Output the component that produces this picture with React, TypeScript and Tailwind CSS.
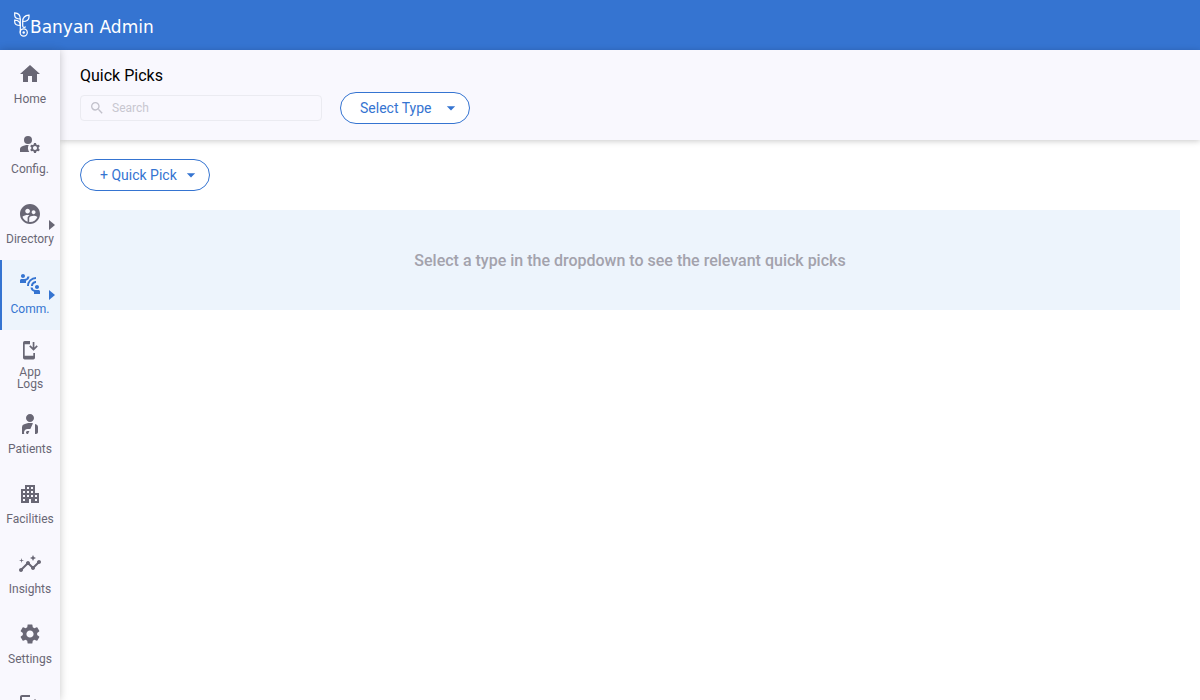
import type { ComponentType, ReactNode } from "react";
import {
  MdApartment,
  MdArrowDropDown,
  MdConnectWithoutContact,
  MdHome,
  MdInsights,
  MdLogout,
  MdManageAccounts,
  MdPersonalInjury,
  MdSearch,
  MdSettings,
  MdSupervisedUserCircle,
} from "react-icons/md";

type NavItem = {
  label: string;
  icon: ComponentType<{ className?: string }>;
  active?: boolean;
  submenu?: boolean;
  compact?: boolean;
};

function PhoneDownloadIcon({ className }: { className?: string }) {
  return (
    <svg viewBox="-3 -1 20 20" className={className} fill="currentColor">
      <path d="M7 0H1.700A1.700 1.700 0 0 0 0 1.700v15A1.700 1.700 0 0 0 1.700 18.400h8.600a1.700 1.700 0 0 0 1.700-1.700V12h-1.700v2.800H1.700V3.300H7z" />
      <path d="M9.700 1h1.700v5.500l2.200-2.200 1.200 1.200-4.300 4.300-4.300-4.300 1.200-1.200 2.300 2.200z" />
    </svg>
  );
}

const navItems: NavItem[] = [
  { label: "Home", icon: MdHome },
  { label: "Config.", icon: MdManageAccounts },
  { label: "Directory", icon: MdSupervisedUserCircle, submenu: true },
  { label: "Comm.", icon: MdConnectWithoutContact, submenu: true, active: true },
  { label: "App Logs", icon: PhoneDownloadIcon, compact: true },
  { label: "Patients", icon: MdPersonalInjury },
  { label: "Facilities", icon: MdApartment },
  { label: "Insights", icon: MdInsights },
  { label: "Settings", icon: MdSettings },
  { label: "Logout", icon: MdLogout },
];

function NavLink({ label, icon: Icon, active, submenu, compact }: NavItem) {
  return (
    <a
      href="#"
      className={`relative flex h-[70px] shrink-0 flex-col items-center text-xs ${
        compact ? "gap-1.5 pt-2.5" : "gap-[5px] pt-3"
      } ${active ? "bg-[#edf4fc] text-[#3574d1]" : "text-[#696775]"}`}
    >
      {active && <span className="absolute inset-y-0 left-0 w-0.5 bg-[#3574d1]" />}
      <Icon className={compact ? "size-5" : "size-6"} />
      <span className={`text-center ${compact ? "w-8 leading-3" : "leading-4"}`}>{label}</span>
      {submenu && (
        <svg viewBox="0 0 6 10" className="absolute top-[30px] right-[5px] h-2.5 w-1.5" fill="currentColor">
          <path d="M0 0l6 5-6 5z" />
        </svg>
      )}
    </a>
  );
}

function PillButton({ children }: { children: ReactNode }) {
  return (
    <button
      type="button"
      className="flex h-8 w-[130px] items-center justify-between rounded-full border border-[#3574d1] bg-white pr-2 pl-[19px] text-sm text-[#3574d1]"
    >
      {children}
      <MdArrowDropDown className="size-5" />
    </button>
  );
}

function Logo() {
  return (
    <svg viewBox="0 0 16 26" className="h-[26px] w-4" fill="none" stroke="currentColor" strokeWidth="1.2">
      <path d="M.7.8v2.400c0 2.400 1.800 3.800 5.600 3.800C6.300 3.200 4.500 1 .7.800z" />
      <path d="M.7 8.200v1.800c0 2.300 1.800 3.500 5.600 3.500 0-3.500-1.800-5.300-5.600-5.300z" />
      <path d="M8.700 9.500c0-3.800 2-6 6.300-6.300v1.800c0 3-2 4.500-6.300 4.500z" />
      <path d="M6.300 7v13.500M8.700 9.500v4.500c0 1.700 2 1.700 3 .7" />
      <circle cx="9.700" cy="20.500" r="3.600" />
      <circle cx="9.700" cy="20.500" r="1.200" fill="currentColor" stroke="none" />
    </svg>
  );
}

export default function App() {
  return (
    <div className="flex h-screen flex-col overflow-hidden bg-white font-[Roboto,sans-serif]">
      <header className="flex h-[50px] shrink-0 items-center bg-[#3574d1] px-3.5 text-white">
        <a href="#" className="flex items-center">
          <Logo />
          <span className="pt-1 font-[DejaVu_Sans,sans-serif] text-[17px] leading-6">Banyan Admin</span>
        </a>
      </header>
      <div className="flex min-h-0 flex-1">
        <nav className="z-10 flex w-[60px] shrink-0 flex-col overflow-y-auto bg-[#f9f8fe] shadow-[0_0_8px_rgba(0,0,0,0.22)] [scrollbar-width:none]">
          {navItems.map((item) => (
            <NavLink key={item.label} {...item} />
          ))}
        </nav>
        <main className="min-w-0 flex-1">
          <section className="bg-[#f9f8fe] px-5 pt-3.5 pb-4 shadow-[0_1px_6px_rgba(0,0,0,0.22)]">
            <h1 className="text-base leading-6 text-black">Quick Picks</h1>
            <div className="mt-1 flex items-center gap-[18px]">
              <label className="flex h-[26px] w-[242px] items-center gap-[7px] rounded border border-[#ebebf1] px-2 text-[#c2c1cb]">
                <MdSearch className="size-4" />
                <input
                  type="search"
                  aria-label="Search"
                  placeholder="Search"
                  className="min-w-0 flex-1 bg-transparent text-xs outline-none placeholder:text-[#c8c7d0]"
                />
              </label>
              <PillButton>Select Type</PillButton>
            </div>
          </section>
          <section className="flex flex-col gap-[19px] px-5 pt-[19px]">
            <PillButton>+ Quick Pick</PillButton>
            <p className="flex h-[100px] items-center justify-center bg-[#edf4fc] pt-0.5 text-base font-medium text-[#a3a2ac]">
              Select a type in the dropdown to see the relevant quick picks
            </p>
          </section>
        </main>
      </div>
    </div>
  );
}
